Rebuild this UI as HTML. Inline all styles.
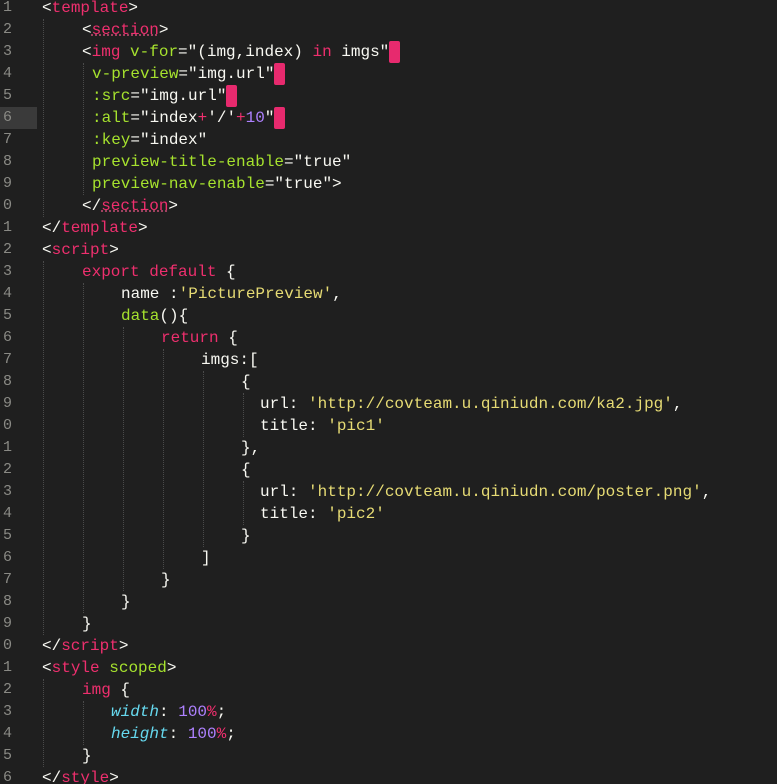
<!DOCTYPE html>
<html><head><meta charset="utf-8"><style>
html,body{margin:0;padding:0;background:#1f1f1f;width:777px;height:784px;overflow:hidden}
.ed{position:relative;width:777px;height:784px;font-family:"Liberation Mono",monospace;font-size:16px;color:#f8f8f2}
.ln{position:absolute;left:0;height:22px;line-height:22px;white-space:pre}
.num{position:absolute;width:12px;left:0;height:22px;line-height:22px;color:#8a8a85;text-align:right;overflow:hidden;direction:rtl;font-size:15px}
.p{color:#ee2f6e}.g{color:#a6e22e}.y{color:#e6db74}.v{color:#ae81ff}.c{color:#66d9ef;font-style:italic}.w{color:#f8f8f2}
.blk{display:inline-block;width:11px;height:22px;background:#e72a6e;vertical-align:top;border-radius:2px}
.u{text-decoration:underline dotted #c04a70}
.guide{position:absolute;width:0;border-left:1px dotted #4a4a4a}
</style></head><body><div class="ed">
<div style="position:absolute;left:0;top:107px;width:37px;height:22px;background:#3a3a3a"></div>
<div class="guide" style="left:43px;top:19px;height:198px"></div>
<div class="guide" style="left:83px;top:63px;height:132px"></div>
<div class="guide" style="left:43px;top:261px;height:374px"></div>
<div class="guide" style="left:83px;top:283px;height:330px"></div>
<div class="guide" style="left:123px;top:327px;height:264px"></div>
<div class="guide" style="left:163px;top:349px;height:220px"></div>
<div class="guide" style="left:203px;top:371px;height:176px"></div>
<div class="guide" style="left:243px;top:393px;height:44px"></div>
<div class="guide" style="left:243px;top:481px;height:44px"></div>
<div class="guide" style="left:43px;top:679px;height:88px"></div>
<div class="guide" style="left:83px;top:701px;height:44px"></div>
<div id="lines"></div>
<div class="num" style="top:-3px">1</div><div class="num" style="top:19px">2</div><div class="num" style="top:41px">3</div><div class="num" style="top:63px">4</div><div class="num" style="top:85px">5</div><div class="num" style="top:107px">6</div><div class="num" style="top:129px">7</div><div class="num" style="top:151px">8</div><div class="num" style="top:173px">9</div>
<div class="num" style="top:195px">0</div><div class="num" style="top:217px">1</div><div class="num" style="top:239px">2</div><div class="num" style="top:261px">3</div><div class="num" style="top:283px">4</div><div class="num" style="top:305px">5</div><div class="num" style="top:327px">6</div><div class="num" style="top:349px">7</div><div class="num" style="top:371px">8</div><div class="num" style="top:393px">9</div><div class="num" style="top:415px">0</div><div class="num" style="top:437px">1</div><div class="num" style="top:459px">2</div><div class="num" style="top:481px">3</div><div class="num" style="top:503px">4</div><div class="num" style="top:525px">5</div><div class="num" style="top:547px">6</div><div class="num" style="top:569px">7</div><div class="num" style="top:591px">8</div><div class="num" style="top:613px">9</div><div class="num" style="top:635px">0</div><div class="num" style="top:657px">1</div><div class="num" style="top:679px">2</div><div class="num" style="top:701px">3</div><div class="num" style="top:723px">4</div><div class="num" style="top:745px">5</div><div class="num" style="top:767px">6</div>

<div class="ln" style="top:-3px;left:42px">&lt;<span class="p">template</span>&gt;</div>
<div class="ln" style="top:19px;left:82px">&lt;<span class="p u">section</span>&gt;</div>
<div class="ln" style="top:41px;left:82px">&lt;<span class="p">img</span> <span class="g">v-for</span>="(img,index) <span class="p">in</span> imgs"<span class="blk"></span></div>
<div class="ln" style="top:63px;left:92px"><span class="g">v-preview</span>="img.url"<span class="blk"></span></div>
<div class="ln" style="top:85px;left:92px"><span class="g">:src</span>="img.url"<span class="blk"></span></div>
<div class="ln" style="top:107px;left:92px"><span class="g">:alt</span>="index<span class="p">+</span>'/'<span class="p">+</span><span class="v">10</span>"<span class="blk"></span></div>
<div class="ln" style="top:129px;left:92px"><span class="g">:key</span>="index"</div>
<div class="ln" style="top:151px;left:92px"><span class="g">preview-title-enable</span>="true"</div>
<div class="ln" style="top:173px;left:92px"><span class="g">preview-nav-enable</span>="true"&gt;</div>
<div class="ln" style="top:195px;left:82px">&lt;/<span class="p u">section</span>&gt;</div>
<div class="ln" style="top:217px;left:42px">&lt;/<span class="p">template</span>&gt;</div>
<div class="ln" style="top:239px;left:42px">&lt;<span class="p">script</span>&gt;</div>
<div class="ln" style="top:261px;left:82px"><span class="p">export</span> <span class="p">default</span> {</div>
<div class="ln" style="top:283px;left:121px">name :<span class="y">'PicturePreview'</span>,</div>
<div class="ln" style="top:305px;left:121px"><span class="g">data</span>(){</div>
<div class="ln" style="top:327px;left:161px"><span class="p">return</span> {</div>
<div class="ln" style="top:349px;left:201px">imgs:[</div>
<div class="ln" style="top:371px;left:241px">{</div>
<div class="ln" style="top:393px;left:260px">url: <span class="y">'http://covteam.u.qiniudn.com/ka2.jpg'</span>,</div>
<div class="ln" style="top:415px;left:260px">title: <span class="y">'pic1'</span></div>
<div class="ln" style="top:437px;left:241px">},</div>
<div class="ln" style="top:459px;left:241px">{</div>
<div class="ln" style="top:481px;left:260px">url: <span class="y">'http://covteam.u.qiniudn.com/poster.png'</span>,</div>
<div class="ln" style="top:503px;left:260px">title: <span class="y">'pic2'</span></div>
<div class="ln" style="top:525px;left:241px">}</div>
<div class="ln" style="top:547px;left:201px">]</div>
<div class="ln" style="top:569px;left:161px">}</div>
<div class="ln" style="top:591px;left:121px">}</div>
<div class="ln" style="top:613px;left:82px">}</div>
<div class="ln" style="top:635px;left:42px">&lt;/<span class="p">script</span>&gt;</div>
<div class="ln" style="top:657px;left:42px">&lt;<span class="p">style</span> <span class="g">scoped</span>&gt;</div>
<div class="ln" style="top:679px;left:82px"><span class="p">img</span> {</div>
<div class="ln" style="top:701px;left:111px"><span class="c">width</span>: <span class="v">100</span><span class="p">%</span>;</div>
<div class="ln" style="top:723px;left:111px"><span class="c">height</span>: <span class="v">100</span><span class="p">%</span>;</div>
<div class="ln" style="top:745px;left:82px">}</div>
<div class="ln" style="top:767px;left:42px">&lt;/<span class="p">style</span>&gt;</div>
</div></body></html>
